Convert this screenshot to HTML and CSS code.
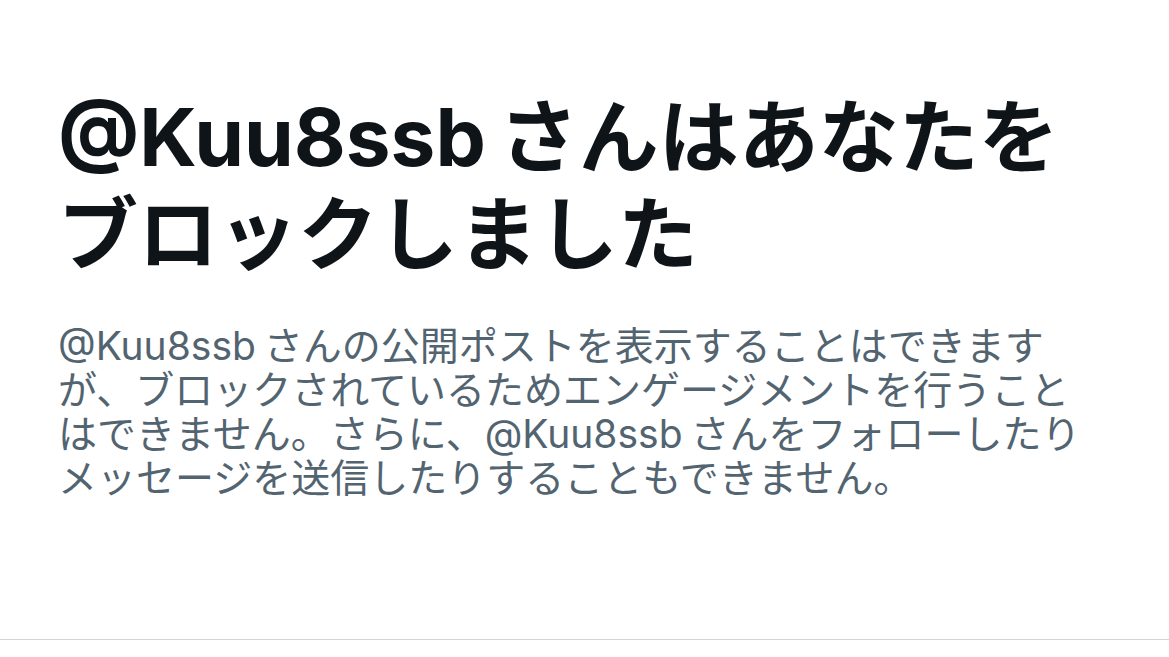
FILE: index.html
```html
<!DOCTYPE html>
<html lang="ja">
<head>
    <meta charset="UTF-8">
    <title>ブロックされています</title>
    <link rel="stylesheet" href="styles.css">
</head>
<body>
    <div class="blocked">
        <h1 class="blocked-title">@Kuu8ssb さんはあなたをブロックしました</h1>
        <p class="blocked-text">@Kuu8ssb さんの公開ポストを表示することはできますが、ブロックされているためエンゲージメントを行うことはできません。さらに、@Kuu8ssb さんをフォローしたりメッセージを送信したりすることもできません。</p>
    </div>
</body>
</html>
```

FILE: styles.css
```css
    body {
        margin: 0;
        padding: 0;
        background-color: #fff;
        font-family: Inter, "Noto Sans CJK JP", sans-serif;
    }

    .blocked {
        padding: 88px 84px 139px 58px;
        border-bottom: 1px solid #d3d6d8;
    }

    .blocked-title {
        margin: 0 0 42px;
        font-size: 80px;
        line-height: 97px;
        font-weight: bold;
        color: #0f1419;
        word-spacing: -6px;
    }

    .blocked-text {
        margin: 0;
        font-size: 39px;
        line-height: 44px;
        color: #536471;
        word-spacing: -3px;
    }
```
